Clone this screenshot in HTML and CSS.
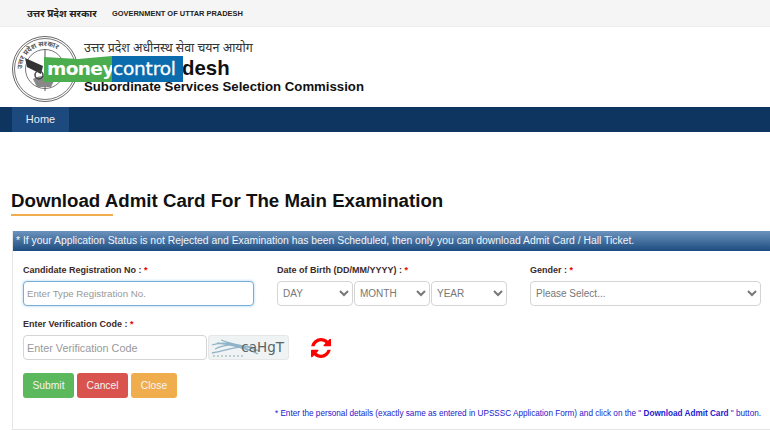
FILE: index.html
```html
<!DOCTYPE html>
<html lang="en">
<head>
  <meta charset="UTF-8">
  <title>Download Admit Card</title>
  <link rel="stylesheet" href="styles.css">
</head>
<body>
  <!-- Top bar -->
  <div class="topbar">
    <span class="topbar-hi">उत्तर प्रदेश सरकार</span>
    <span class="topbar-en">GOVERNMENT OF UTTAR PRADESH</span>
  </div>

  <!-- Header -->
  <div class="header">
    <svg class="seal" width="68" height="68" viewBox="0 0 68 68">
      <defs>
        <path id="seal-arc" d="M11 34a23 23 0 0 1 46 0"/>
      </defs>
      <circle cx="34" cy="34" r="32.5" fill="#fff" stroke="#666" stroke-width="1"/>
      <circle cx="34" cy="34" r="30.5" fill="none" stroke="#777" stroke-width="1"/>
      <circle cx="34" cy="34" r="19.5" fill="none" stroke="#777" stroke-width="1"/>
      <text class="seal-text"><textPath href="#seal-arc">उत्तर प्रदेश सरकार</textPath></text>
      <path d="M34 14v42" stroke="#555" stroke-width="1"/>
      <path d="M14 23l18 8-2 8-14-7z" fill="#333"/>
      <path d="M22 44c6-4 14-4 22 0l-4 8H26z" fill="#888"/>
      <circle cx="28" cy="40" r="4" fill="none" stroke="#444" stroke-width="1.5"/>
    </svg>
    <div class="title">
      <div class="title-hi">उत्तर प्रदेश अधीनस्थ सेवा चयन आयोग</div>
      <div class="title-state">desh</div>
      <div class="title-en">Subordinate Services Selection Commission</div>
    </div>
    <div class="watermark"><span class="wm-money">money</span><span class="wm-control">control</span></div>
  </div>

  <!-- Nav -->
  <div class="nav">
    <a class="nav-item">Home</a>
  </div>

  <div class="content">
    <h1>Download Admit Card For The Main Examination</h1>
    <div class="h-line"></div>

    <div class="panel">
      <div class="panel-head">* If your Application Status is not Rejected and Examination has been Scheduled, then only you can download Admit Card / Hall Ticket.</div>
      <div class="panel-body">
        <div class="row">
          <div class="col-reg">
            <label>Candidate Registration No : <i>*</i></label>
            <input class="field field-focus" type="text" placeholder="Enter Type Registration No.">
          </div>
          <div class="col-dob">
            <label>Date of Birth (DD/MM/YYYY) : <i>*</i></label>
            <div class="dob">
              <select class="field"><option>DAY</option></select>
              <select class="field"><option>MONTH</option></select>
              <select class="field"><option>YEAR</option></select>
            </div>
          </div>
          <div class="col-gender">
            <label>Gender : <i>*</i></label>
            <select class="field"><option>Please Select...</option></select>
          </div>
        </div>

        <div class="verify">
          <label>Enter Verification Code : <i>*</i></label>
          <div class="verify-row">
            <input class="field code-input" type="text" placeholder="Enter Verification Code">
            <div class="captcha">
              <svg class="captcha-bg" width="80" height="24" viewBox="0 0 80 24">
                <path d="M3 9c14-5 28 0 46 9M6 13c12-6 28-5 44 2M3 17c14-2 26-8 40-6M12 4c10 4 22 6 34 8M8 7c12 1 26 5 38 9" fill="none" stroke="#8fb4c9" stroke-width="1.3"/>
                <path d="M4 20h30" stroke="#b4c2c6" stroke-width="1.5" stroke-dasharray="2 2"/>
              </svg>
              <span>caHgT</span>
            </div>
            <svg class="refresh" width="20" height="20" viewBox="128 128 1536 1536">
              <path fill="#f00" d="M1639 1056q0 5-1 7-64 268-268 434.5t-478 166.5q-146 0-282.5-55t-243.5-157l-129 129q-19 19-45 19t-45-19-19-45v-448q0-26 19-45t45-19h448q26 0 45 19t19 45-19 45l-137 137q71 66 161 102t187 36q134 0 250-65t186-179q11-17 53-117 8-23 30-23h192q13 0 22.5 9.5t9.5 22.5zm25-800v448q0 26-19 45t-45 19h-448q-26 0-45-19t-19-45 19-45l138-138q-148-137-349-137-134 0-250 65t-186 179q-11 17-53 117-8 23-30 23h-199q-13 0-22.5-9.5t-9.5-22.5v-7q65-268 270-434.5t480-166.5q146 0 284 55.5t245 156.5l130-129q19-19 45-19t45 19 19 45z"/>
            </svg>
          </div>
        </div>

        <div class="buttons">
          <button class="btn btn-green">Submit</button>
          <button class="btn btn-red">Cancel</button>
          <button class="btn btn-orange">Close</button>
        </div>

        <p class="note">* Enter the personal details (exactly same as entered in UPSSSC Application Form) and click on the " <b>Download Admit Card</b> " button.</p>
      </div>
    </div>
  </div>
</body>
</html>
```

FILE: styles.css
```css
* {
  margin: 0;
  padding: 0;
  box-sizing: border-box;
}

body {
  font-family: "Liberation Sans", Arial, sans-serif;
  background-color: #fff;
  color: #333;
  width: 770px;
  height: 431px;
  overflow: hidden;
}

/* Top bar */
.topbar {
  height: 27px;
  background-color: #f5f5f5;
  border-bottom: 1px solid #eee;
  display: flex;
  align-items: center;
  padding-left: 27px;
  color: #222;
}

.topbar-hi {
  font-family: "Noto Sans", "Liberation Sans", sans-serif;
  font-size: 10px;
  font-weight: bold;
  width: 85px;
}

.topbar-en {
  font-size: 7.45px;
  font-weight: bold;
}

/* Header */
.header {
  position: relative;
  height: 80px;
  display: flex;
  padding: 8px 0 0 11px;
}

.seal {
  flex: none;
}

.seal-text {
  font-family: "Noto Sans", sans-serif;
  font-size: 7px;
  font-weight: bold;
  fill: #555;
}

.title {
  margin-left: 5px;
  color: #111;
  padding-top: 4px;
}

.title-hi {
  font-family: "Noto Sans", sans-serif;
  font-size: 12.4px;
  line-height: 18px;
  color: #333;
}

.title-state {
  font-size: 20.4px;
  font-weight: bold;
  line-height: 21px;
  margin-top: 1px;
  padding-left: 98px;
}

.title-en {
  font-size: 13.2px;
  font-weight: bold;
  line-height: 16px;
}

.watermark {
  position: absolute;
  left: 44px;
  top: 29px;
  height: 26px;
  display: flex;
  color: #fff;
  font-family: "DejaVu Sans", sans-serif;
  font-size: 18.5px;
  font-weight: bold;
  line-height: 26px;
}

.wm-money {
  width: 68px;
  padding-left: 3px;
  background-color: #4cad4e;
  letter-spacing: -0.6px;
  clip-path: polygon(0 1px, 50% 3px, 100% 0, 100% 100%, 0 100%);
}

.wm-control {
  width: 71px;
  padding-left: 1px;
  background-color: #0b6cad;
  font-weight: normal;
  letter-spacing: -0.2px;
  -webkit-text-stroke: 0.3px #fff;
}

/* Nav */
.nav {
  height: 25px;
  background-color: #0e3460;
  padding-left: 12px;
  display: flex;
}

.nav-item {
  width: 57px;
  background-color: #1d4a7e;
  color: #e8eef5;
  font-size: 11px;
  line-height: 25px;
  text-align: center;
}

/* Content */
.content {
  padding: 57px 0 0 11px;
}

h1 {
  font-size: 18.7px;
  line-height: 24px;
  font-weight: bold;
  color: #111;
}

.h-line {
  width: 102px;
  height: 2px;
  background-color: #f0ad4e;
  margin-top: 1px;
}

.panel {
  margin: 15px 0 0 1px;
  width: 770px;
  border: 1px solid #e6e6e6;
  border-top: none;
}

.panel-head {
  height: 20px;
  background: linear-gradient(to bottom, #6c93bd, #1d4c80);
  color: #f2f5f9;
  font-size: 10.38px;
  line-height: 20px;
  padding-left: 3px;
  white-space: nowrap;
}

.panel-body {
  height: 178px;
  padding: 14px 0 0 10px;
}

.row {
  display: flex;
}

label {
  display: block;
  font-size: 9px;
  font-weight: bold;
  line-height: 11px;
  color: #3b2a2a;
  margin-bottom: 5px;
}

label i {
  color: #e00;
  font-style: normal;
}

.field {
  height: 25px;
  border: 1px solid #d4d4d4;
  border-radius: 4px;
  background-color: #fff;
  color: #777;
  font-family: "Liberation Sans", Arial, sans-serif;
  font-size: 10px;
  padding-left: 1px;
  outline: none;
}

.field::placeholder {
  color: #999;
}

.field-focus {
  border-color: #78aed6;
  box-shadow: 0 0 3px rgba(102, 175, 233, 0.6);
  font-size: 9.7px;
  padding-left: 3px;
}

.col-reg {
  width: 254px;
}

.col-reg .field {
  width: 231px;
}

.col-dob {
  width: 253px;
}

.dob {
  display: flex;
  gap: 1px;
}

.dob .field {
  width: 76px;
}

.col-gender .field {
  width: 231px;
}

.verify {
  margin-top: 13px;
}

.verify-row {
  display: flex;
  align-items: center;
}

.code-input {
  width: 184px;
  font-size: 10.8px;
  padding-left: 3px;
}

.captcha {
  position: relative;
  width: 81px;
  height: 25px;
  margin-left: 1px;
  border: 1px solid #e6e6e6;
  border-radius: 3px;
  background-color: #f0f3f3;
  color: #596468;
  font-family: "DejaVu Sans", sans-serif;
  font-size: 13.5px;
  line-height: 23px;
  text-align: right;
  padding-right: 4px;
}

.captcha-bg {
  position: absolute;
  left: 0;
  top: 0;
}

.captcha span {
  position: relative;
}

.refresh {
  margin-left: 22px;
}

.buttons {
  display: flex;
  gap: 3px;
  margin-top: 13px;
}

.btn {
  height: 25px;
  border: none;
  border-radius: 3px;
  color: #f4f4f4;
  font-family: "Liberation Sans", Arial, sans-serif;
  font-size: 10.3px;
}

.btn-green {
  width: 51px;
  background-color: #5cb85c;
}

.btn-red {
  width: 51px;
  background-color: #d9534f;
}

.btn-orange {
  width: 46px;
  background-color: #f0ad4e;
}

.note {
  margin-top: 10px;
  width: 738px;
  text-align: right;
  font-size: 8.18px;
  line-height: 11px;
  color: #2222cc;
  white-space: nowrap;
}
```
